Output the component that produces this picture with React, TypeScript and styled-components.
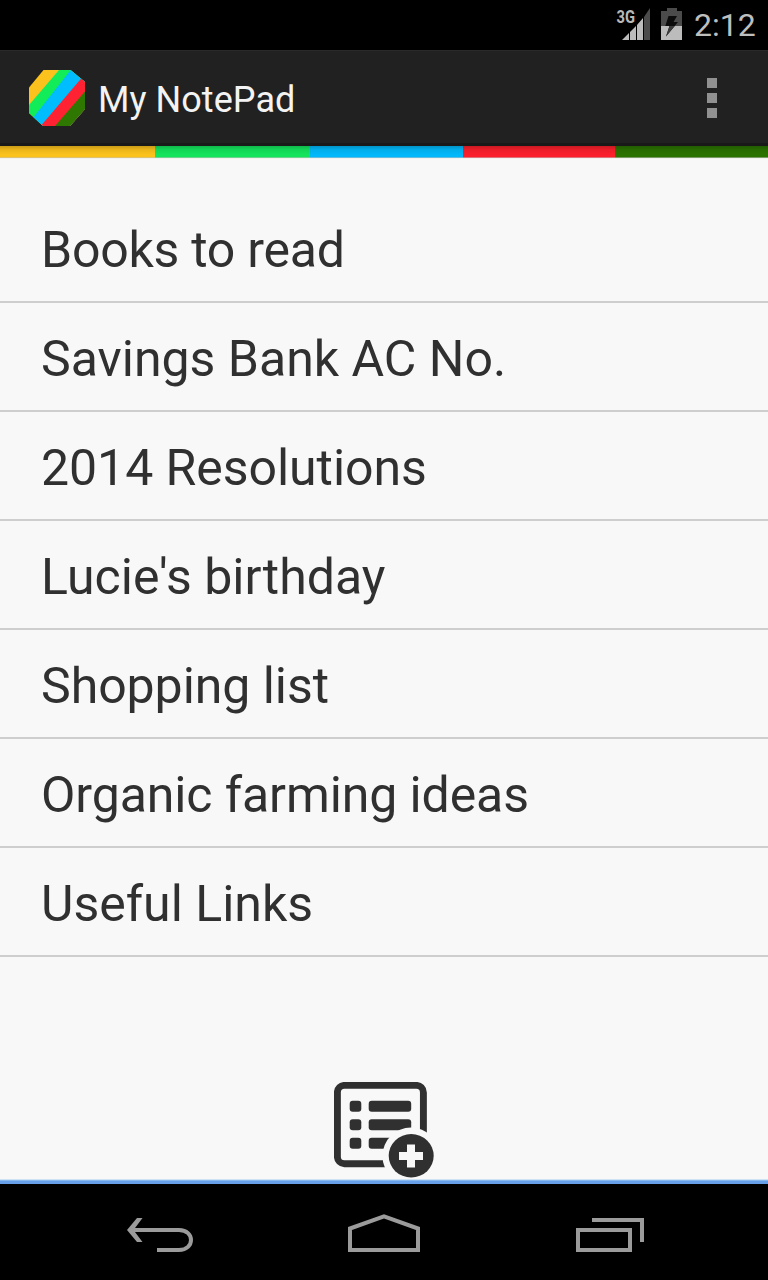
import React from "react";
import styled, { createGlobalStyle } from "styled-components";

const GlobalStyle = createGlobalStyle`
  * { box-sizing: border-box; }
  body { margin: 0; background: #000; font-family: Roboto, "Liberation Sans", sans-serif; }
`;

const Screen = styled.div`
  width: 768px;
  height: 1280px;
  display: flex;
  flex-direction: column;
  overflow: hidden;
  background: #f8f8f8;
`;

const StatusBar = styled.header`
  height: 50px;
  flex: none;
  display: flex;
  justify-content: flex-end;
  background: #000;
  padding-right: 12px;
`;

const StatusIcons = styled.svg`
  display: block;
  width: 74px;
  height: 50px;
  margin-right: 4px;
`;

const NetworkLabel = styled.text`
  font: 700 17.5px Roboto, sans-serif;
  fill: #b8b8b8;
`;

const Clock = styled.time`
  width: 62px;
  line-height: 51px;
  font-size: 32px;
  color: #bebebe;
  white-space: nowrap;
`;

const ActionBar = styled.div`
  height: 96px;
  flex: none;
  display: flex;
  align-items: center;
  padding: 0 51px 0 29px;
  background: #212121;
  border-top: 1px solid #2a2a2a;
  border-bottom: 3px solid #191919;
`;

const Logo = styled.svg`
  display: block;
  width: 56px;
  height: 56px;
  margin-top: 1px;
`;

const Title = styled.h1`
  flex: 1;
  margin: 5px 0 0 13px;
  font-size: 36px;
  font-weight: 400;
  letter-spacing: 0.05px;
  color: #f3f3f3;
  white-space: nowrap;
`;

const Overflow = styled.button`
  border: 0;
  padding: 0;
  margin-top: 1px;
  background: none;
  display: grid;
  gap: 5px;
`;

const Dot = styled.span`
  width: 10px;
  height: 10px;
  background: #919191;
`;

const Stripes = styled.div`
  height: 13px;
  flex: none;
  display: flex;
  border-bottom: 1px solid #f1f1ee;
`;

const Stripe = styled.span<{ $color: string; $width: number }>`
  width: ${(p) => p.$width}px;
  background: linear-gradient(rgba(0, 0, 0, 0.2), rgba(0, 0, 0, 0.06) 35%, transparent 80%),
    ${(p) => p.$color};
  border-bottom: 1px solid rgba(248, 248, 248, 0.4);
`;

const NoteList = styled.ul`
  margin: 0;
  padding: 35px 0 0;
  list-style: none;
  flex: 1;
`;

const Note = styled.li<{ $tracking: number }>`
  height: 109px;
  padding: 5px 0 0 41px;
  border-bottom: 2px solid #cecece;
  font-size: 50px;
  line-height: 102px;
  letter-spacing: ${(p) => p.$tracking}px;
  color: #303030;
  white-space: nowrap;
`;

const Footer = styled.div`
  height: 106px;
  flex: none;
  display: flex;
  padding: 4px 0 0 334px;
  border-bottom: 3px solid #67a0e8;
  box-shadow: inset 0 -1px #86b7ed, inset 0 -2px #cfe3f5;
`;

const AddButton = styled.button`
  width: 100px;
  height: 96px;
  border: 0;
  padding: 0;
  background: none;
`;

const Icon = styled.svg`
  display: block;
`;

const NavBar = styled.nav`
  height: 96px;
  flex: none;
  display: flex;
  align-items: flex-start;
  justify-content: space-between;
  padding: 26px 120px 0;
  background: #000;
`;

const notes = [
  { title: "Books to read", tracking: -0.25 },
  { title: "Savings Bank AC No.", tracking: 0 },
  { title: "2014 Resolutions", tracking: -0.05 },
  { title: "Lucie's birthday", tracking: 0.04 },
  { title: "Shopping list", tracking: -0.05 },
  { title: "Organic farming ideas", tracking: -0.1 },
  { title: "Useful Links", tracking: 0 },
];

const stripes = [
  { color: "#fbc21c", width: 155 },
  { color: "#14e45c", width: 155 },
  { color: "#00b8fa", width: 153 },
  { color: "#fa1f2b", width: 151.5 },
  { color: "#2b7300", width: 153.5 },
];

export default function App() {
  return (
    <>
      <GlobalStyle />
      <Screen>
        <StatusBar>
          <StatusIcons viewBox="616 0 74 50">
            <NetworkLabel x="616.5" y="23" textLength="18.5" lengthAdjust="spacingAndGlyphs">3G</NetworkLabel>
            <path d="M622 40 629 33V40ZM630 32 636 26V40H630ZM637 25 643 18V40H637Z" fill="#bcbcbc" />
            <path d="M644 17 650 8V40H644Z" fill="#4b4b4b" />
            <path d="M661 11H667V8H677V11H682V26H661Z" fill="#4b4b4b" />
            <path d="M661 26H682V40H661Z" fill="#bcbcbc" />
            <path d="M668.5 16H677L673.5 22H678L666 36.5L669.5 26H665.3Z" fill="#0c0c0c" />
            <path d="M669.5 26H674.7L666 36.5Z" fill="#3c3c3c" />
          </StatusIcons>
          <Clock>2:12</Clock>
        </StatusBar>
        <ActionBar>
          <Logo viewBox="29 70 56 56">
            <clipPath id="octagon">
              <path d="M43.5 70H70.5L85 82V109L70 126H43L29 113V87.5Z" />
            </clipPath>
            <g clipPath="url(#octagon)">
              <path d="M29 70H85V126H29Z" fill="#fbc11d" />
              <path d="M59 70H85V126H29V105Z" fill="#12ec59" />
              <path d="M70.7 70H85V126H34L26.3 126.5Z" fill="#00bdff" />
              <path d="M88 70.5V126H40.7Z" fill="#ff2233" />
              <path d="M85 91.5V126H55Z" fill="#2e7700" />
            </g>
          </Logo>
          <Title>My NotePad</Title>
          <Overflow aria-label="More options">
            <Dot />
            <Dot />
            <Dot />
          </Overflow>
        </ActionBar>
        <Stripes>
          {stripes.map((s) => (
            <Stripe key={s.color} $color={s.color} $width={s.width} />
          ))}
        </Stripes>
        <NoteList>
          {notes.map((n) => (
            <Note key={n.title} $tracking={n.tracking}>{n.title}</Note>
          ))}
        </NoteList>
        <Footer>
          <AddButton aria-label="Add note">
            <Icon width="100" height="96" viewBox="334 1082 100 96">
              <rect x="337.4" y="1085.4" width="86" height="78.3" rx="7" fill="none" stroke="#303030" strokeWidth="6.9" />
              <g fill="#303030">
                <rect x="349.7" y="1100.7" width="11.6" height="11" rx="3" />
                <rect x="349.7" y="1119.2" width="11.6" height="11" rx="3" />
                <rect x="349.7" y="1137.7" width="11.6" height="11" rx="3" />
                <rect x="368.7" y="1100.7" width="42.5" height="11" rx="3" />
                <rect x="368.7" y="1119.2" width="42.5" height="11" rx="3" />
                <rect x="368.7" y="1137.7" width="42.5" height="11" rx="3" />
              </g>
              <circle cx="411" cy="1156" r="28.5" fill="#f8f8f8" />
              <ellipse cx="411.2" cy="1155.8" rx="22.5" ry="21.7" fill="#303030" />
              <path d="M411 1144.5V1167.5M399 1156H423" stroke="#f8f8f8" strokeWidth="8" />
            </Icon>
          </AddButton>
        </Footer>
        <NavBar>
          <Icon width="80" height="50" viewBox="120 1210 80 50" fill="none" stroke="#9b9b9b" strokeWidth="4">
            <path d="M129 1230H179C195 1230 195 1250 179 1250H157" />
            <path d="M142.5 1218H137L127 1230 137 1242H142.5L133.5 1230Z" fill="#9b9b9b" stroke="none" />
          </Icon>
          <Icon width="80" height="50" viewBox="344 1210 80 50" fill="none" stroke="#9b9b9b" strokeWidth="4">
            <path d="M350 1250V1228.5L384 1216.3 418 1228.5V1250Z" />
          </Icon>
          <Icon width="80" height="50" viewBox="568 1210 80 50" fill="none" stroke="#9b9b9b" strokeWidth="4">
            <path d="M578 1230H630V1250H578ZM592 1220H642V1242" />
          </Icon>
        </NavBar>
      </Screen>
    </>
  );
}
